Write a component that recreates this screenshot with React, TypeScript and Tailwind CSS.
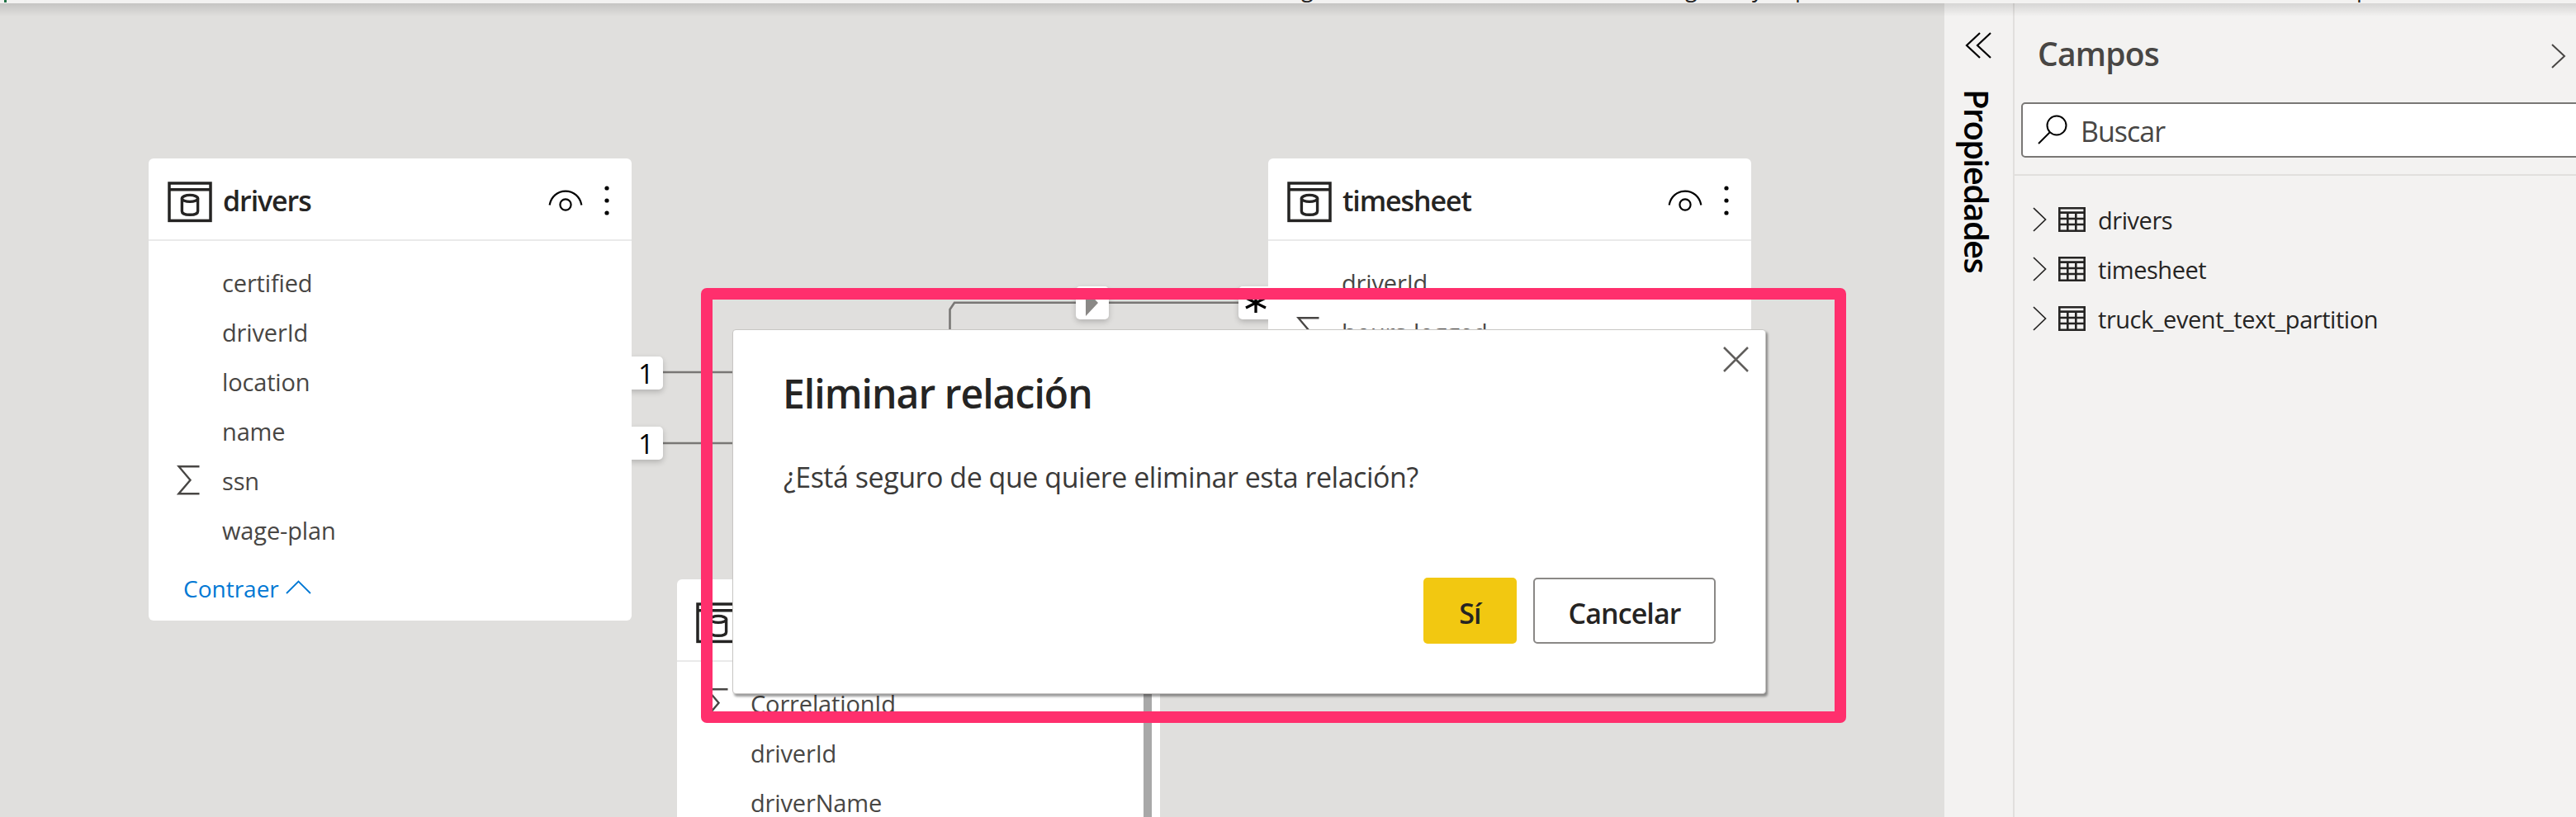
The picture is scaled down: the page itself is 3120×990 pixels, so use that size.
import React from "react";

const ink = "text-[#484644]";

function TableIcon() {
  return (
    <svg width="54" height="50" viewBox="0 0 54 50" fill="none" stroke="#252423" className="shrink-0">
      <rect x="2" y="2" width="50" height="45.4" strokeWidth="3.5" />
      <path d="M2 9.7H52" strokeWidth="3.5" />
      <ellipse cx="27" cy="20.4" rx="9.6" ry="4" strokeWidth="3.4" />
      <path d="M17.4 20.4V36C17.4 38.8 21.7 40.3 27 40.3S36.6 38.8 36.6 36V20.4" strokeWidth="3.4" />
    </svg>
  );
}

function EyeIcon() {
  return (
    <svg width="42" height="28" viewBox="0 0 42 28" fill="none" stroke="#000" className="shrink-0">
      <path d="M1.6 19.5C3.5 9 11.5 2.6 21 2.6S38.5 9 40.4 19.5" strokeWidth="2.2" />
      <circle cx="21" cy="19" r="6.6" strokeWidth="2.2" />
    </svg>
  );
}

function Dots() {
  return (
    <svg width="6" height="38" viewBox="0 0 6 38" className="shrink-0">
      <circle cx="3" cy="4" r="2.6" />
      <circle cx="3" cy="19" r="2.6" />
      <circle cx="3" cy="34" r="2.6" />
    </svg>
  );
}

function Sigma() {
  return (
    <svg width="28" height="38" viewBox="0 0 28 38" fill="none" stroke="#484644" strokeWidth="2.4" className="-mt-[3px] shrink-0">
      <path d="M27.5 2.2H2.5L16.5 18.7L2.5 35.2H27.5" />
    </svg>
  );
}

function FieldRow({ name, sum }: { name: string; sum?: boolean }) {
  return (
    <div className="flex h-[60px] items-center">
      <div className="flex w-[89px] shrink-0 pl-[34px]">{sum && <Sigma />}</div>
      <span className={`-mt-[2px] text-[29px] leading-none tracking-[-0.15px] whitespace-nowrap ${ink}`}>{name}</span>
    </div>
  );
}

function Card({ title, children, className }: { title: string; children: React.ReactNode; className: string }) {
  return (
    <section className={`absolute w-[585px] overflow-hidden rounded-[6px] bg-white ${className}`}>
      <header className="flex h-[100px] items-center border-b-2 border-[#eaeaea] pt-[8px] pr-[27px] pl-[23px]">
        <TableIcon />
        <h2 className="-mt-[4px] ml-[13px] flex-1 text-[34px] leading-none font-semibold tracking-[-1.1px] text-[#252423]">{title}</h2>
        <div className="-mt-[5px]"><EyeIcon /></div>
        <div className="-mt-[4px] ml-[26px]"><Dots /></div>
      </header>
      <div className="pt-[21px]">{children}</div>
    </section>
  );
}

function Endpoint({ children, className }: { children?: React.ReactNode; className: string }) {
  return (
    <div className={`absolute flex h-[40px] items-center justify-center rounded-[5px] bg-white shadow-[0_3px_7px_rgba(0,0,0,0.2)] ${className}`}>
      {children}
    </div>
  );
}

function GridIcon() {
  return (
    <svg width="33" height="30" viewBox="0 0 33 30" fill="none" stroke="#252423" strokeWidth="2.6" className="shrink-0">
      <path d="M1.3 1.3H31.7V28.7H1.3ZM1.3 6.6H31.7M1.3 14H31.7M1.3 21H31.7M11.3 6.6V28.7M21.3 6.6V28.7" />
    </svg>
  );
}

function TreeRow({ name }: { name: string }) {
  return (
    <li className="flex h-[60px] items-center">
      <svg width="17" height="30" viewBox="0 0 17 30" fill="none" stroke="#252423" strokeWidth="1.7" className="shrink-0">
        <path d="M1 1L15.5 15L1 29" />
      </svg>
      <div className="ml-[14px]"><GridIcon /></div>
      <span className="mt-[1px] ml-[15px] text-[29px] leading-none tracking-[-0.45px] whitespace-nowrap text-[#252423]">{name}</span>
    </li>
  );
}

function Ribbon() {
  return (
    <div className="relative h-[4px] shrink-0 overflow-hidden bg-[#f3f2f1] text-[27px] leading-none text-[#252423]">
      <i className="absolute top-0 left-[5px] h-[3px] w-[3px] bg-[#217346]" />
      <span className="absolute -top-[28px] left-[1576px]">g</span>
      <span className="absolute -top-[28px] left-[2041px]">g</span>
      <span className="absolute -top-[28px] left-[2122px]">y</span>
      <span className="absolute -top-[28px] left-[2174px]">p</span>
      <span className="absolute -top-[28px] left-[2854px]">p</span>
    </div>
  );
}

export default function App() {
  return (
    <div className="relative flex h-[990px] w-[3120px] flex-col overflow-hidden bg-[#f3f2f1] font-['Open_Sans',sans-serif]">
      <Ribbon />
      <div className="relative flex min-h-0 flex-1">
        <main className="relative w-[2355px] shrink-0 overflow-hidden bg-[#e0dfdd]">
          <svg className="absolute inset-0" width="2355" height="986" fill="none" stroke="#797775" strokeWidth="2.6">
            <path d="M800 447H1150.5V371L1156 362.7H1540M800 533H1150" />
          </svg>
          <Endpoint className="top-[428px] left-[760px] w-[43px] pl-[2px]">
            <span className="text-[33px] leading-none font-medium text-black">1</span>
          </Endpoint>
          <Endpoint className="top-[513px] left-[760px] w-[43px] pl-[2px]">
            <span className="text-[33px] leading-none font-medium text-black">1</span>
          </Endpoint>
          <Endpoint className="top-[343px] left-[1303px] w-[40px]">
            <svg width="16" height="32" viewBox="0 0 16 32"><path d="M0 0L15 16L0 32Z" fill="#8a8886" /></svg>
          </Endpoint>
          <Endpoint className="top-[343px] left-[1500px] w-[44px] pr-[3px]">
            <svg width="26" height="28" viewBox="0 0 26 28" stroke="#000" strokeWidth="3.3"><path d="M13 2V26M1 8L25 20M1 20L25 8" /></svg>
          </Endpoint>
          <Card title="drivers" className="top-[188px] left-[180px] h-[560px]">
            <FieldRow name="certified" />
            <FieldRow name="driverId" />
            <FieldRow name="location" />
            <FieldRow name="name" />
            <FieldRow name="ssn" sum />
            <FieldRow name="wage-plan" />
            <div className="flex items-center pt-[26px] pl-[42px] text-[#0078d4]">
              <span className="text-[28px] leading-none">Contraer</span>
              <svg className="-mt-[4px] ml-[8px]" width="31" height="17" viewBox="0 0 31 17" fill="none" stroke="#0078d4" strokeWidth="1.8">
                <path d="M1 16L15.5 1.5L30 16" />
              </svg>
            </div>
          </Card>
          <Card title="timesheet" className="top-[188px] left-[1536px] h-[560px]">
            <FieldRow name="driverId" />
            <FieldRow name="hours-logged" sum />
          </Card>
          <Card title="truck_event" className="top-[698px] left-[820px] h-[400px]">
            <FieldRow name="CorrelationId" sum />
            <FieldRow name="driverId" />
            <FieldRow name="driverName" />
            <div className="absolute top-[102px] right-[10px] h-[300px] w-[10px] bg-[#a8a8a8]" />
          </Card>
          <div className="absolute top-[345px] left-[849px] h-[527px] w-[1387px] rounded-[7px] border-[14px] border-[#ff2f6d]" />
          <div className="absolute top-[395px] left-[887px] flex h-[442px] w-[1252px] flex-col rounded-[4px] border border-[#c8c6c4] bg-white pt-[53px] pr-[60px] pl-[61px] shadow-[2px_3px_3px_rgba(0,0,0,0.4)]">
            <h1 className="-ml-[1px] text-[48px] leading-none font-semibold tracking-[-0.95px] whitespace-nowrap text-[#252423]">Eliminar relación</h1>
            <p className="mt-[60px] text-[34px] leading-none tracking-[-0.47px] whitespace-nowrap text-[#3b3a39]">¿Está seguro de que quiere eliminar esta relación?</p>
            <div className="mt-auto mb-[60px] flex justify-end gap-[20px]">
              <button className="h-[80px] w-[113px] rounded-[5px] bg-[#f2c811] pt-[6px] text-[34px] font-semibold tracking-[-0.9px] text-[#252423]">Sí</button>
              <button className="h-[80px] w-[221px] rounded-[5px] border-2 border-[#8a8886] bg-white pt-[6px] text-[34px] font-semibold tracking-[-0.9px] text-[#252423]">Cancelar</button>
            </div>
            <svg className="absolute top-[20px] right-[20px]" width="31" height="31" viewBox="0 0 31 31" stroke="#605e5c" strokeWidth="2.5">
              <path d="M1 1L30 30M30 1L1 30" />
            </svg>
          </div>
        </main>
        <aside className="flex w-[85px] shrink-0 flex-col items-center border-r-2 border-[#e1dfdd]">
          <svg className="mt-[35px] mr-[2px]" width="34" height="32" viewBox="0 0 34 32" fill="none" stroke="#000" strokeWidth="2.2">
            <path d="M19 1L3 16L19 31M32 1L16 16L32 31" />
          </svg>
          <span className="mt-[37px] mr-[5px] text-[40px] leading-none font-semibold tracking-[-1.7px] whitespace-nowrap text-black [writing-mode:vertical-rl]">Propiedades</span>
        </aside>
        <aside className="min-w-0 flex-1 overflow-hidden">
          <div className="flex h-[120px] items-center pl-[28px]">
            <h2 className="flex-1 text-[39px] leading-none font-semibold tracking-[-0.8px] text-[#484644]">Campos</h2>
            <svg className="mt-[7px] mr-[12px]" width="18" height="30" viewBox="0 0 18 30" fill="none" stroke="#484644" strokeWidth="2"><path d="M1 1L16 15L1 29" /></svg>
          </div>
          <div className="ml-[8px] flex h-[67px] w-[700px] items-center rounded-[5px] border-2 border-[#797775] bg-white pl-[18px]">
            <svg className="-mt-[2px]" width="36" height="36" viewBox="0 0 36 36" fill="none" stroke="#000" strokeWidth="2"><circle cx="23" cy="13" r="11.5" /><path d="M15 21L1 35" /></svg>
            <span className="mt-[3px] ml-[16px] text-[34px] leading-none tracking-[-1px] text-[#484644]">Buscar</span>
          </div>
          <div className="mt-[20px] border-t-2 border-[#e1dfdd] pt-[23px] pl-[22px]">
            <ul>
              <TreeRow name="drivers" />
              <TreeRow name="timesheet" />
              <TreeRow name="truck_event_text_partition" />
            </ul>
          </div>
        </aside>
        <div className="absolute inset-x-0 top-0 h-[16px] bg-linear-to-b from-black/12 to-transparent" />
      </div>
    </div>
  );
}
